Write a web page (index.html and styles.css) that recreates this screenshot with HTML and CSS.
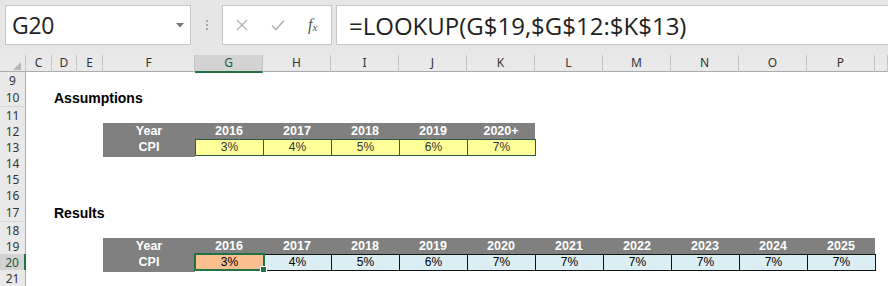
FILE: index.html
```html
<!DOCTYPE html>
<html lang="en">
<head>
  <meta charset="UTF-8">
  <title>CPI Lookup</title>
  <link rel="stylesheet" href="styles.css">
</head>
<body>
  <div class="toolbar">
    <div class="namebox">
      <span class="cellref">G20</span>
      <svg class="caret" width="8" height="5" viewBox="0 0 8 5"><path d="M0 0h8L4 4.5z" fill="#777"/></svg>
    </div>
    <div class="grip"><i></i><i></i><i></i></div>
    <div class="actions">
      <svg width="12" height="12" viewBox="0 0 12 12"><path d="M1 1l10 10M11 1L1 11" stroke="#b4b4b4" stroke-width="1.4"/></svg>
      <svg width="14" height="12" viewBox="0 0 14 12"><path d="M1 6.5l4 4L13 1.5" stroke="#b4b4b4" stroke-width="1.6" fill="none"/></svg>
      <span class="fx">f<sub>x</sub></span>
    </div>
    <div class="formula">=LOOKUP(G$19,$G$12:$K$13)</div>
  </div>

  <div class="sheet">
    <div class="row colheads">
      <div class="corner"><span></span></div>
      <div class="ch">C</div><div class="ch">D</div><div class="ch">E</div><div class="ch">F</div>
      <div class="ch active">G</div><div class="ch">H</div><div class="ch">I</div><div class="ch">J</div>
      <div class="ch">K</div><div class="ch">L</div><div class="ch">M</div><div class="ch">N</div>
      <div class="ch">O</div><div class="ch">P</div><div class="ch"></div>
    </div>

    <div class="row"><div class="rh">9</div></div>
    <div class="row tall"><div class="rh">10</div><div class="title">Assumptions</div></div>
    <div class="row"><div class="rh">11</div></div>
    <div class="row">
      <div class="rh">12</div>
      <div class="band span5">
        <div>Year</div><div>2016</div><div>2017</div><div>2018</div><div>2019</div><div>2020+</div>
      </div>
    </div>
    <div class="row">
      <div class="rh">13</div>
      <div class="band label">CPI</div>
      <div class="strip yellow span5">
        <div>3%</div><div>4%</div><div>5%</div><div>6%</div><div>7%</div>
      </div>
    </div>
    <div class="row"><div class="rh">14</div></div>
    <div class="row"><div class="rh">15</div></div>
    <div class="row"><div class="rh">16</div></div>
    <div class="row tall"><div class="rh">17</div><div class="title">Results</div></div>
    <div class="row"><div class="rh">18</div></div>
    <div class="row">
      <div class="rh">19</div>
      <div class="band span10">
        <div>Year</div><div>2016</div><div>2017</div><div>2018</div><div>2019</div><div>2020</div>
        <div>2021</div><div>2022</div><div>2023</div><div>2024</div><div>2025</div>
      </div>
    </div>
    <div class="row">
      <div class="rh active">20</div>
      <div class="band label">CPI</div>
      <div class="strip blue span10">
        <div class="selected">3%<span class="handle"></span></div>
        <div>4%</div><div>5%</div><div>6%</div><div>7%</div>
        <div>7%</div><div>7%</div><div>7%</div><div>7%</div><div>7%</div>
      </div>
    </div>
    <div class="row last"><div class="rh">21</div></div>
  </div>
</body>
</html>
```

FILE: styles.css
```css
:root {
  --chrome: #e6e6e6;
  --box-border: #c6c6c6;
  --head-bg: #e9e9e9;
  --head-line: #c4c4c4;
  --excel-green: #217346;
  --band: #808080;
  --cols: 26px 26px 25px 26px 92px repeat(10, 68px) 1fr;
}

body {
  margin: 0;
  width: 888px;
  height: 286px;
  overflow: hidden;
  background: #fff;
  font-family: "Liberation Sans", Arial, sans-serif;
}

/* formula bar */
.toolbar {
  height: 55px;
  box-sizing: border-box;
  padding: 5px 0 10px 5px;
  background: var(--chrome);
  display: flex;
  align-items: stretch;
}

.namebox {
  width: 186px;
  box-sizing: border-box;
  background: #fff;
  border: 1px solid var(--box-border);
  display: flex;
  align-items: center;
  justify-content: space-between;
  padding: 0 6px 0 6px;
}

.cellref {
  font-family: "Open Sans", sans-serif;
  font-size: 23px;
  color: #222;
  letter-spacing: -0.3px;
}

.caret { margin-top: 1px; }

.grip {
  width: 31px;
  display: flex;
  flex-direction: column;
  align-items: center;
  justify-content: center;
  gap: 2px;
}

.grip i {
  width: 2px;
  height: 2px;
  background: #a6a6a6;
}

.actions {
  width: 110px;
  box-sizing: border-box;
  background: #fff;
  border: 1px solid var(--box-border);
  display: flex;
  align-items: center;
  padding: 0 0 0 13px;
}

.actions svg:first-child { margin-right: 23px; }
.actions svg:nth-child(2) { margin-right: 23px; }

.fx {
  font-family: "Liberation Serif", serif;
  font-style: italic;
  font-size: 16px;
  color: #555;
}

.fx sub {
  font-size: 11px;
  vertical-align: -1px;
}

.formula {
  flex: 1;
  margin-left: 4px;
  background: #fff;
  border: 1px solid var(--box-border);
  border-right: none;
  padding-left: 12px;
  display: flex;
  align-items: center;
  font-family: "Open Sans", sans-serif;
  font-size: 24px;
  color: #222;
}

/* grid */
.row {
  display: grid;
  grid-template-columns: var(--cols);
  height: 16px;
  font-size: 11px;
}

.row.tall { height: 19px; }
.row.last { height: 15px; }

.colheads {
  height: 17px;
  background: var(--head-bg);
  border-bottom: 1px solid #ababab;
  box-sizing: border-box;
}

.corner {
  border-right: 1px solid var(--head-line);
  position: relative;
}

.corner span {
  position: absolute;
  right: 4px;
  bottom: 2px;
  width: 0;
  height: 0;
  border-left: 8px solid transparent;
  border-bottom: 8px solid #b8b8b8;
}

.ch {
  border-right: 1px solid var(--head-line);
  text-align: center;
  font-family: "Noto Sans", sans-serif;
  font-size: 12px;
  line-height: 16px;
  color: #333;
}

.ch.active {
  background: #d3d3d3;
  border-bottom: 2px solid var(--excel-green);
  margin-bottom: -1px;
  color: #1e5a3a;
}

.rh {
  background: var(--head-bg);
  border-right: 1px solid #ababab;
  border-bottom: 1px solid #d6d6d6;
  font-family: "Noto Sans", sans-serif;
  font-size: 12px;
  color: #333;
  display: flex;
  align-items: center;
  justify-content: center;
}

.rh.active {
  background: #d3d3d3;
  border-right: 2px solid var(--excel-green);
  color: #1e5a3a;
}

.title {
  grid-column: 3 / 8;
  font-weight: bold;
  font-size: 14px;
  padding-left: 2px;
  align-self: end;
  line-height: 17px;
}

.band {
  background: var(--band);
  color: #fff;
  font-weight: bold;
  font-size: 12.5px;
  line-height: 16px;
}

.band.label {
  grid-column: 5;
  text-align: center;
}

.band.span5,
.band.span10 {
  display: grid;
  grid-template-columns: 92px repeat(10, 68px);
  text-align: center;
}

.band.span5 { grid-column: 5 / 11; }
.band.span10 { grid-column: 5 / 16; }

.strip {
  display: grid;
  gap: 1px;
  padding: 1px;
  margin-right: -1px;
  height: 17px;
  box-sizing: border-box;
  text-align: center;
  font-size: 12px;
  line-height: 15px;
}

.strip.span5 {
  grid-column: 6 / 11;
  grid-template-columns: repeat(5, 1fr);
}

.strip.span10 {
  grid-column: 6 / 16;
  grid-template-columns: repeat(10, 1fr);
}

.strip.yellow { background: #2b5a46; color: #333; }
.strip.yellow div { background: #ffff99; }

.strip.blue { background: #111; color: #000; }
.strip.blue div { background: #daeef3; }

.strip.blue .selected {
  background: #fabf8f;
  position: relative;
}

.selected::before {
  content: "";
  position: absolute;
  inset: -2px -2px -1px -2px;
  border: 2px solid var(--excel-green);
}

.handle {
  position: absolute;
  right: -4px;
  bottom: -3px;
  width: 5px;
  height: 5px;
  background: var(--excel-green);
  border: 1px solid #fff;
}
```
